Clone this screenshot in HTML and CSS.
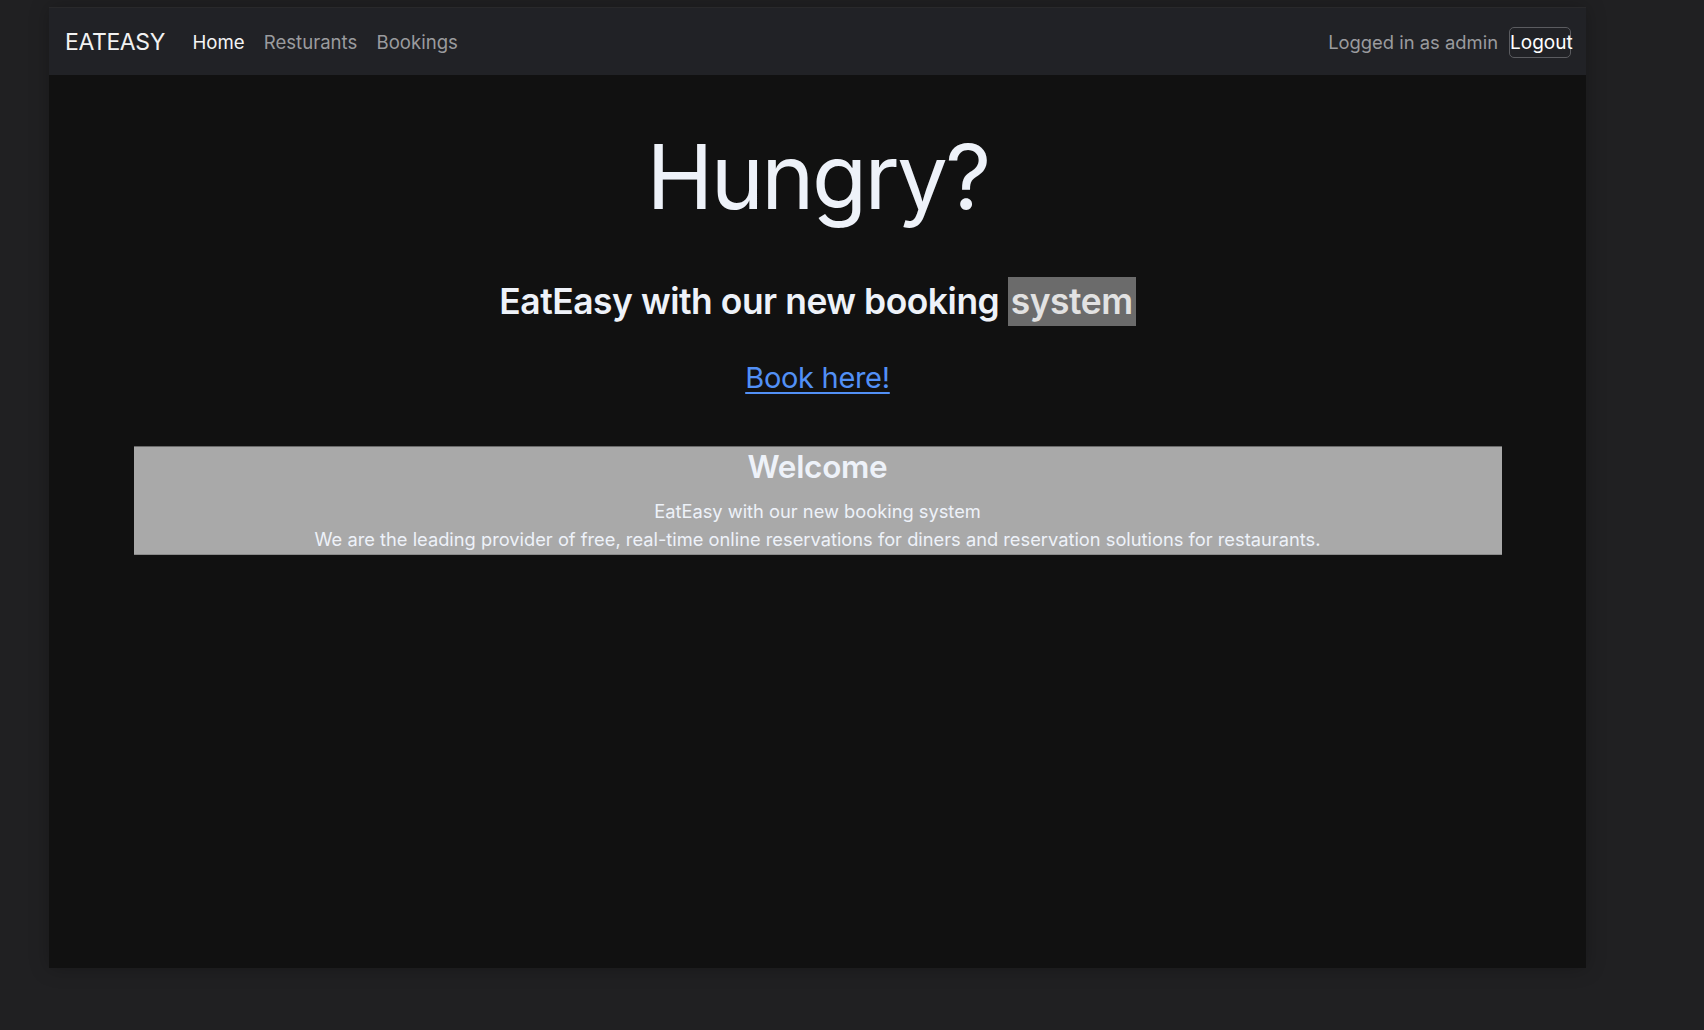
FILE: index.html
```html
<!DOCTYPE html>
<html lang="en">
<head>
<meta charset="utf-8">
<title>EatEasy</title>
<link rel="stylesheet" href="styles.css">
</head>
<body>
<div class="window">
  <nav class="navbar">
    <div class="nav-left">
      <a class="brand" href="#">EATEASY</a>
      <a class="nav-link active" href="#">Home</a>
      <a class="nav-link" href="#">Resturants</a>
      <a class="nav-link" href="#">Bookings</a>
    </div>
    <div class="nav-right">
      <span class="user">Logged in as admin</span>
      <button class="logout" type="button">Logout</button>
    </div>
  </nav>
  <main class="content">
    <h1 class="hero">Hungry?</h1>
    <h2 class="tagline">EatEasy with our new booking <mark class="hl">system</mark></h2>
    <a class="book" href="#">Book here!</a>
    <section class="welcome">
      <h3 class="welcome-title">Welcome</h3>
      <p class="welcome-text">EatEasy with our new booking system<br>We are the leading provider of free, real-time online reservations for diners and reservation solutions for restaurants.</p>
    </section>
  </main>
</div>
</body>
</html>
```

FILE: styles.css
```css
* { box-sizing: border-box; }
html, body { height: 100%; }
body {
  margin: 0;
  padding: 7px 0 0 49px;
  background: #202022;
  font-family: Inter, "Noto Sans", "Liberation Sans", sans-serif;
  overflow: hidden;
}
.window {
  width: 1537px;
  height: 961px;
  display: flex;
  flex-direction: column;
  background: #111111;
  box-shadow: 0 0 18px rgba(0, 0, 0, 0.25);
  border-top: 1px solid #29292b;
}
.navbar {
  height: 67px;
  flex: none;
  background: #212226;
  display: flex;
  align-items: center;
  justify-content: space-between;
  padding: 1px 15px 0 16px;
}
.nav-left, .nav-right { display: flex; align-items: center; }
.brand {
  color: #f2f2f2;
  text-decoration: none;
  font-size: 23px;
  letter-spacing: -0.4px;
  margin-right: 18px;
}
.nav-link {
  color: #9a9b9e;
  text-decoration: none;
  font-size: 18.6px;
  padding: 0 9.6px;
}
.nav-link.active { color: #f4f4f5; }
.user {
  color: #9a9b9e;
  font-size: 18.4px;
  margin-right: 11px;
}
.logout {
  font-family: inherit;
  font-size: 19px;
  color: #ffffff;
  background: transparent;
  border: 1px solid #5b5c60;
  border-radius: 5px;
  padding: 1px 0;
  height: 31px;
  width: 62px;
  line-height: 1;
}
.content {
  flex: 1;
  display: flex;
  flex-direction: column;
  align-items: center;
  padding-top: 48px;
  color: #eef2f9;
}
.hero {
  margin: 0;
  font-size: 90px;
  font-weight: 400;
  line-height: 1.2;
  letter-spacing: -2.6px;
}
.tagline {
  margin: 50px 0 0;
  font-size: 35.4px;
  font-weight: 600;
  line-height: 1.2;
  letter-spacing: -0.45px;
}
.hl {
  background: #6b6b6b;
  color: #e2e2e2;
  padding: 3px 3px;
}
.book {
  margin-top: 37px;
  color: #5290f6;
  font-size: 29px;
  text-decoration: underline;
  text-underline-offset: 4px;
  text-decoration-thickness: 2px;
  letter-spacing: -0.3px;
}
.welcome {
  margin-top: 51px;
  width: 1368px;
  height: 109px;
  background: #a9a9a9;
  text-align: center;
  border-top: 1px solid #6a6a6a;
  border-bottom: 1px solid #8a8a8a;
}
.welcome-title {
  margin: 1px 0 0;
  font-size: 31.5px;
  font-weight: 600;
  line-height: 1.2;
  letter-spacing: -0.3px;
}
.welcome-text {
  margin: 11px 0 0;
  font-size: 18.3px;
  line-height: 28px;
}
```
